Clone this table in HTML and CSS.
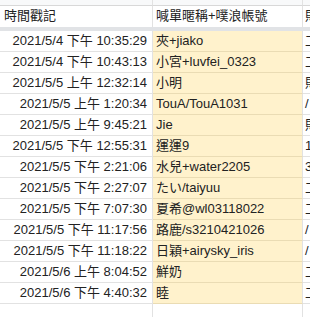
FILE: index.html
```html
<!DOCTYPE html>
<html>
<head>
<meta charset="utf-8">
<link rel="stylesheet" href="styles.css">
</head>
<body>
<div class="sheet">
  <div class="row top"><div class="c c1"></div><div class="c c2"></div><div class="c c3"></div></div>
  <div class="row head"><div class="c c1 l">時間戳記</div><div class="c c2 w">喊單暱稱+噗浪帳號</div><div class="c c3">則</div></div>
  <div class="band"></div>
  <div class="row"><div class="c c1">2021/5/4 下午 10:35:29</div><div class="c c2">夾+jiako</div><div class="c c3">工</div></div>
  <div class="row"><div class="c c1">2021/5/4 下午 10:43:13</div><div class="c c2">小宮+luvfei_0323</div><div class="c c3">工</div></div>
  <div class="row"><div class="c c1">2021/5/5 上午 12:32:14</div><div class="c c2">小明</div><div class="c c3">則</div></div>
  <div class="row"><div class="c c1">2021/5/5 上午 1:20:34</div><div class="c c2">TouA/TouA1031</div><div class="c c3">/</div></div>
  <div class="row"><div class="c c1">2021/5/5 上午 9:45:21</div><div class="c c2">Jie</div><div class="c c3">則</div></div>
  <div class="row"><div class="c c1">2021/5/5 下午 12:55:31</div><div class="c c2">運運9</div><div class="c c3">1</div></div>
  <div class="row"><div class="c c1">2021/5/5 下午 2:21:06</div><div class="c c2">水兒+water2205</div><div class="c c3">3</div></div>
  <div class="row"><div class="c c1">2021/5/5 下午 2:27:07</div><div class="c c2">たい/taiyuu</div><div class="c c3">工</div></div>
  <div class="row"><div class="c c1">2021/5/5 下午 7:07:30</div><div class="c c2">夏希@wl03118022</div><div class="c c3">工</div></div>
  <div class="row"><div class="c c1">2021/5/5 下午 11:17:56</div><div class="c c2">路鹿/s3210421026</div><div class="c c3">/</div></div>
  <div class="row"><div class="c c1">2021/5/5 下午 11:18:22</div><div class="c c2">日穎+airysky_iris</div><div class="c c3">/</div></div>
  <div class="row"><div class="c c1">2021/5/6 上午 8:04:52</div><div class="c c2">鮮奶</div><div class="c c3">工</div></div>
  <div class="row"><div class="c c1">2021/5/6 下午 4:40:32</div><div class="c c2">睦</div><div class="c c3">工</div></div>
  <div class="row"><div class="c c1"></div><div class="c c2 w"></div><div class="c c3"></div></div>
</div>
</body>
</html>
```

FILE: styles.css
```css
html, body {
  margin: 0;
  padding: 0;
  background: #ffffff;
}
.sheet {
  width: 310px;
  height: 317px;
  overflow: hidden;
  font-family: "Liberation Sans", Arial, "Noto Sans CJK TC", sans-serif;
  font-size: 13px;
  color: #222222;
}
.row {
  display: grid;
  grid-template-columns: 153px 150px 40px;
  height: 21px;
}
.c {
  box-sizing: border-box;
  border-right: 1px solid #e2e2e2;
  border-bottom: 1px solid #e2e2e2;
  line-height: 20px;
  white-space: nowrap;
  overflow: hidden;
}
.c1 {
  text-align: right;
  padding-right: 5px;
}
.c2 {
  background: #fff2cc;
  border-bottom-color: #eadcb4;
  padding-left: 3px;
}
.c3 {
  padding-left: 2px;
}
.c2.w {
  background: #ffffff;
  border-bottom-color: #e2e2e2;
}
.row.top {
  height: 6px;
}
.row.top .c {
  background: #f8f9fa;
  border-bottom-color: #d8d8d8;
}
.row.head {
  height: 21px;
}
.row.head .c {
  border-bottom: none;
  line-height: 20px;
}
.c1.l {
  text-align: left;
  padding-left: 4px;
  padding-right: 0;
}
.band {
  height: 4px;
  background: #e1e3e6;
}
```
